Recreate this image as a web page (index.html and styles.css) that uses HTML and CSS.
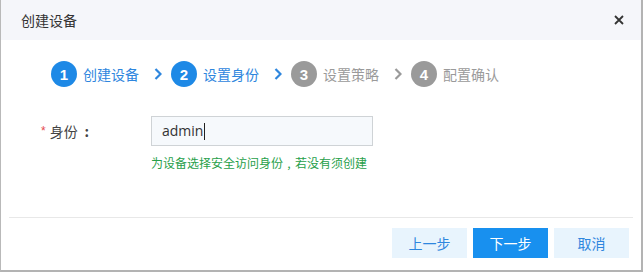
FILE: index.html
```html
<!DOCTYPE html>
<html lang="zh-CN">
<head>
<meta charset="utf-8">
<title>创建设备</title>
<link rel="stylesheet" href="styles.css">
</head>
<body>
<div class="dialog">
  <div class="header">
    <span class="title">创建设备</span>
    <svg class="close" width="10" height="10" viewBox="0 0 10 10"><path d="M1 1L9 9M9 1L1 9" stroke="#333" stroke-width="1.8" fill="none"/></svg>
  </div>
  <div class="steps">
    <div class="step active"><span class="num">1</span><span class="label">创建设备</span></div>
    <svg class="chev blue" width="8" height="12" viewBox="0 0 8 12"><path d="M1.5 1L6.5 6L1.5 11" fill="none" stroke-width="2.2"/></svg>
    <div class="step active"><span class="num">2</span><span class="label">设置身份</span></div>
    <svg class="chev blue" width="8" height="12" viewBox="0 0 8 12"><path d="M1.5 1L6.5 6L1.5 11" fill="none" stroke-width="2.2"/></svg>
    <div class="step"><span class="num">3</span><span class="label">设置策略</span></div>
    <svg class="chev gray" width="8" height="12" viewBox="0 0 8 12"><path d="M1.5 1L6.5 6L1.5 11" fill="none" stroke-width="2.2"/></svg>
    <div class="step"><span class="num">4</span><span class="label">配置确认</span></div>
  </div>
  <div class="form-row">
    <div class="form-label"><span class="req">*</span><span>身份</span><span class="p">:</span></div>
    <div class="form-field">
      <div class="input"><span class="value">admin</span><span class="caret"></span></div>
      <div class="hint">为设备选择安全访问身份<span class="p">,</span>若没有须创建</div>
    </div>
  </div>
  <div class="footer">
    <button class="btn light">上一步</button>
    <button class="btn primary">下一步</button>
    <button class="btn light">取消</button>
  </div>
</div>
</body>
</html>
```
FILE: styles.css
```css
html, body {
  margin: 0;
  padding: 0;
  background: #fff;
}
body {
  font-family: "Noto Sans CJK SC", "Noto Sans", sans-serif;
  color: #333;
}
.dialog {
  width: 643px;
  height: 272px;
  box-sizing: border-box;
  border-left: 1px solid #b9b9b9;
  border-right: 2px solid #b3b3b3;
  border-bottom: 2px solid #b3b3b3;
  display: flex;
  flex-direction: column;
  background: #fff;
}
.header {
  height: 40px;
  background: #f5f6fa;
  display: flex;
  align-items: center;
  justify-content: space-between;
  padding: 0 17px 0 20px;
  flex: none;
}
.title {
  font-size: 14px;
  line-height: 16px;
  color: #333;
}
.close {
  display: block;
}
.steps {
  display: flex;
  align-items: center;
  padding: 21px 0 0 50px;
  height: 26px;
  flex: none;
}
.step {
  display: flex;
  align-items: center;
}
.num {
  width: 26px;
  height: 26px;
  border-radius: 50%;
  background: #9a9a9a;
  color: #fff;
  font-family: "Liberation Sans", Arial, sans-serif;
  font-size: 15px;
  font-weight: bold;
  display: flex;
  align-items: center;
  justify-content: center;
}
.label {
  margin-left: 6px;
  width: 56px;
  font-size: 14px;
  line-height: 16px;
  color: #9a9a9a;
  white-space: nowrap;
}
.step.active .num {
  background: #1e89e6;
}
.step.active .label {
  color: #2e86de;
}
.chev {
  display: block;
  margin: 0 9px 0 15px;
}
.chev.blue path {
  stroke: #2e86de;
}
.chev.gray path {
  stroke: #9a9a9a;
}
.p {
  display: inline-block;
  width: 1em;
  text-align: center;
}
.form-row {
  display: flex;
  margin-top: 29px;
  padding-left: 40px;
}
.form-label {
  width: 110px;
  height: 30px;
  display: flex;
  align-items: center;
  font-size: 14px;
  color: #444;
}
.form-label .p {
  margin-left: 2px;
  font-weight: bold;
}
.req {
  color: #e5484d;
  margin-right: 4px;
  font-family: "Liberation Sans", Arial, sans-serif;
  font-size: 12px;
}
.input {
  width: 222px;
  height: 30px;
  box-sizing: border-box;
  border: 1px solid #cfd3d6;
  background: #f6f9fc;
  display: flex;
  align-items: center;
  padding-left: 10px;
}
.value {
  font-family: "Open Sans", "Noto Sans", sans-serif;
  font-size: 14px;
  color: #333;
  line-height: 16px;
}
.caret {
  width: 1px;
  height: 17px;
  background: #222;
  margin-left: 1px;
}
.hint {
  margin-top: 10px;
  font-size: 12px;
  line-height: 14px;
  color: #27a04a;
  white-space: nowrap;
}
.footer {
  margin: auto 8px 0;
  border-top: 1px solid #e8e8e8;
  padding: 10px 4px 12px 0;
  display: flex;
  justify-content: flex-end;
  gap: 6px;
}
.btn {
  width: 75px;
  height: 30px;
  border: none;
  font-family: "Noto Sans CJK SC", sans-serif;
  font-size: 14px;
  padding: 0;
  cursor: pointer;
}
.btn.light {
  background: #e8f4fd;
  color: #2e86de;
}
.btn.primary {
  background: #1890ef;
  color: #fff;
}
```
